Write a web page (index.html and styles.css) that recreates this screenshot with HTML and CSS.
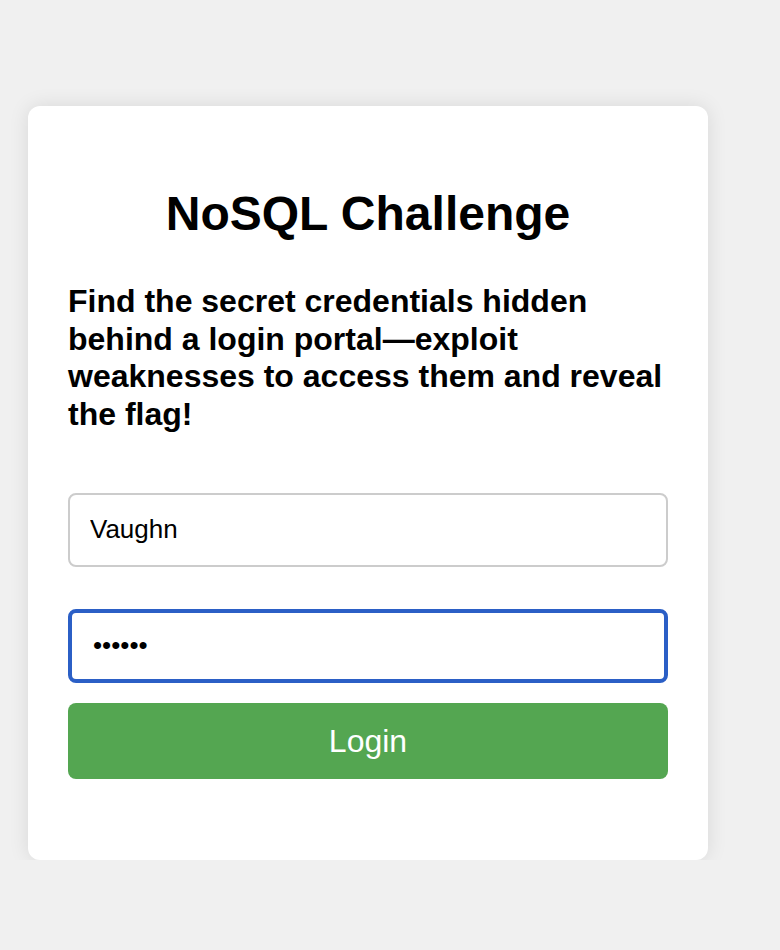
FILE: index.html
```html
<!DOCTYPE html>
<html lang="en">
<head>
<meta charset="utf-8">
<title>NoSQL Challenge</title>
<link rel="stylesheet" href="styles.css">
</head>
<body>
<div class="card">
  <h1 class="title">NoSQL Challenge</h1>
  <p class="desc">Find the secret credentials hidden behind a login portal—exploit weaknesses to access them and reveal the flag!</p>
  <form class="form">
    <input class="field" type="text" value="Vaughn">
    <input class="field field-focus" type="password" value="123456">
    <button class="btn" type="button">Login</button>
  </form>
</div>
</body>
</html>
```

FILE: styles.css
```css
html, body {
  margin: 0;
  padding: 0;
}
body {
  background: #f0f0f0;
  font-family: "Liberation Sans", Arial, sans-serif;
  color: #000;
  padding: 106px 0 0 28px;
}
.card {
  box-sizing: border-box;
  width: 680px;
  height: 754px;
  background: #fff;
  border-radius: 12px;
  box-shadow: 0 0 20px rgba(0, 0, 0, 0.1);
  padding: 80px 40px 40px;
}
.title {
  margin: 0;
  font-size: 48px;
  line-height: 55px;
  font-weight: bold;
  text-align: center;
}
.desc {
  margin: 42px 0 0;
  font-size: 32px;
  line-height: 37.7px;
  font-weight: bold;
}
.form {
  display: flex;
  flex-direction: column;
  margin-top: 59px;
}
.field {
  box-sizing: border-box;
  width: 600px;
  height: 74px;
  margin: 0;
  border: 2px solid #cccccc;
  border-radius: 8px;
  padding: 0 20px;
  font-family: "Liberation Sans", Arial, sans-serif;
  font-size: 26px;
  color: #000;
  background: #fff;
  outline: none;
}
.field + .field {
  margin-top: 42px;
}
.field-focus {
  border: 4px solid #2b5fc6;
  padding: 0 18px 0 21px;
}
.btn {
  margin-top: 20px;
  width: 600px;
  height: 76px;
  padding: 2px 0 0;
  border: none;
  border-radius: 8px;
  background: #54a651;
  color: #fff;
  font-family: "Liberation Sans", Arial, sans-serif;
  font-size: 32px;
  cursor: pointer;
}
```
